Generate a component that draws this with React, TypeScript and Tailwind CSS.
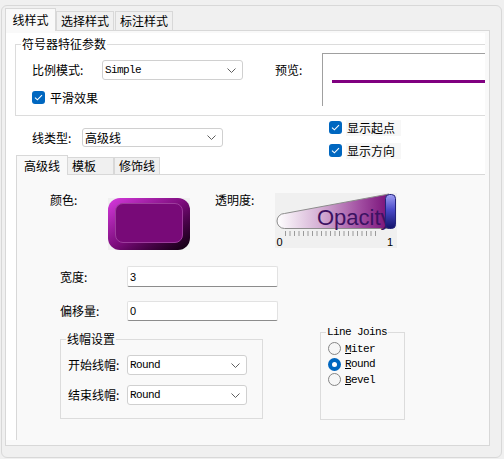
import React from 'react'

type Children = { children: React.ReactNode }

function Chevron() {
  return (
    <svg width="9" height="5" viewBox="0 0 9 5" className="block">
      <polyline points="0.5,0.5 4.5,4.5 8.5,0.5" fill="none" stroke="#5f5f5f" strokeWidth="1" />
    </svg>
  )
}

function Combo({ value, className, mono }: { value: string; className: string; mono?: boolean }) {
  return (
    <div className={`flex items-center justify-between bg-white border border-[#d0d0d0] rounded-[3px] pl-[2px] pr-[6px] ${className}`}>
      <span className={mono ? "font-['Liberation_Mono',monospace] text-[11px] tracking-[-0.6px]" : ''}>{value}</span>
      <Chevron />
    </div>
  )
}

function TextBox({ value, className }: { value: string; className: string }) {
  return (
    <div className={`flex items-center bg-white border border-[#e2e2e2] border-b-[#8c8c8c] rounded-[2px] pl-[2px] font-['Liberation_Sans',sans-serif] text-[11px] ${className}`}>
      {value}
    </div>
  )
}

function Check({ children, shaded }: Children & { shaded?: boolean }) {
  return (
    <div className="flex items-center h-[13px]">
      <span className="w-[13px] h-[13px] rounded-[3px] bg-[#0067c0] flex items-center justify-center shrink-0">
        <svg width="9" height="7" viewBox="0 0 9 7">
          <path d="M1 3.6 L3.4 5.8 L8 1.2" fill="none" stroke="#ffffff" strokeWidth="1.1" />
        </svg>
      </span>
      {shaded ? (
        <span className="ml-[4px] pl-[1px] pr-[6px] h-[16px] leading-[16px] bg-[#f7f7f7]">{children}</span>
      ) : (
        <span className="ml-[5px]">{children}</span>
      )}
    </div>
  )
}

function Radio({ checked, children }: Children & { checked?: boolean }) {
  return (
    <div className="flex items-center h-[15.5px]">
      {checked ? (
        <span className="w-[13px] h-[13px] rounded-full bg-[#0067c0] flex items-center justify-center shrink-0">
          <span className="w-[5px] h-[5px] rounded-full bg-white" />
        </span>
      ) : (
        <span className="w-[13px] h-[13px] rounded-full border border-[#858585] bg-[#f6f6f6] shrink-0" />
      )}
      <span className="ml-[4px]">{children}</span>
    </div>
  )
}

function OpacitySlider() {
  const ticks = Array.from({ length: 21 }, (_, i) => 10.5 + i * 4.5)
  return (
    <svg width="122" height="55" viewBox="0 0 122 55" className="block mt-[1px]">
      <defs>
        <linearGradient id="opacityFill" x1="0" y1="0" x2="1" y2="0">
          <stop offset="0" stopColor="#ffffff" />
          <stop offset="0.4" stopColor="#d2acd2" />
          <stop offset="0.75" stopColor="#a04ca0" />
          <stop offset="1" stopColor="#781078" />
        </linearGradient>
        <linearGradient id="opacityKnob" x1="0" y1="0" x2="0" y2="1">
          <stop offset="0" stopColor="#a0a0f4" />
          <stop offset="0.45" stopColor="#4a4ac8" />
          <stop offset="1" stopColor="#12126a" />
        </linearGradient>
      </defs>
      <rect width="122" height="55" fill="#f0f0f0" />
      <path d="M9.5 35.5 A7.5 7.5 0 0 1 9.5 20.5 L114 1 L114 35.5 Z" fill="url(#opacityFill)" stroke="#8c8c8c" />
      <text x="42" y="32" fontSize="22" fill="#3c1262" fontFamily="Liberation Sans, Arial, sans-serif">
        Opacity
      </text>
      <rect x="110.5" y="1.5" width="10" height="34" rx="4" fill="url(#opacityKnob)" stroke="#24247a" />
      {ticks.map((x) => (
        <line key={x} x1={x} y1="38" x2={x} y2="43" stroke="#9a9a9a" strokeWidth="1" />
      ))}
      <text x="1.5" y="53" fontSize="11" fill="#000" fontFamily="Liberation Sans, Arial, sans-serif">0</text>
      <text x="112" y="53" fontSize="11" fill="#000" fontFamily="Liberation Sans, Arial, sans-serif">1</text>
    </svg>
  )
}

function ColorSwatch() {
  return (
    <div className="mt-[6px] w-[82px] h-[52px] bg-[#f0f0f0] shrink-0">
      <div className="w-full h-full rounded-[12px] bg-linear-to-br from-[#d83ae0] via-[#7c0c7c] to-[#0c000c] pt-[5px] pl-[7px] pr-[7px] pb-[7px]">
        <div className="w-full h-full rounded-[8px] bg-[#780a78] border border-[#9c3c9c]" />
      </div>
    </div>
  )
}

export default function App() {
  return (
    <div className="w-[504px] h-[459px] overflow-hidden bg-[#f0f0f0] pt-[5px] pl-[1px] font-['Noto_Sans_CJK_SC',sans-serif] text-[12px] leading-[14px] text-black">
      <div className="w-[501px] h-[453px] border border-[#d8d8d8] rounded-[6px] pt-[2px] pl-[3px]">
        {/* top tabs */}
        <div className="flex items-end h-[22px]">
          <div className="relative z-10 -mb-px w-[51px] h-[23px] flex items-center justify-center bg-[#f9f9f9] border border-b-0 border-[#d8d8d8]">
            线样式
          </div>
          <div className="w-[58px] h-[19px] flex items-center justify-center bg-[#f0f0f0] border border-b-0 border-[#d8d8d8]">
            选择样式
          </div>
          <div className="ml-[1px] w-[58px] h-[19px] flex items-center justify-center bg-[#f0f0f0] border border-b-0 border-[#d8d8d8]">
            标注样式
          </div>
        </div>

        <div className="w-[485px] h-[416px] border border-[#d8d8d8] bg-[#f9f9f9] pt-[2px]">
          <div className="w-[479px] h-[407px] bg-white overflow-hidden flex flex-col">
            {/* symbolizer parameters */}
            <fieldset className="ml-[9px] mt-[4px] w-[480px] shrink-0 border border-[#dcdcdc]">
              <legend className="ml-[5px] px-[1px] leading-[14px]">符号器特征参数</legend>
              <div className="flex items-start pl-[16px] pb-[9px]">
                <div className="flex flex-col">
                  <div className="mt-[9px] flex items-center">
                    <span className="w-[70px]">比例模式:</span>
                    <Combo value="Simple" mono className="w-[141px] h-[20px]" />
                  </div>
                  <div className="mt-[11px]">
                    <Check>平滑效果</Check>
                  </div>
                </div>
                <span className="ml-[32px] mt-[12px] w-[47px]">预览:</span>
                <div className="mt-[2px] h-[53px] w-[200px] border-l border-t border-[#a0a0a0] bg-white pt-[26px] pl-[9px]">
                  <div className="h-[3px] w-full bg-[#800080]" />
                </div>
              </div>
            </fieldset>

            {/* line type */}
            <div className="flex items-start h-[39px] shrink-0">
              <div className="ml-[26px] mt-[12px] flex items-center">
                <span className="w-[50px]">线类型:</span>
                <Combo value="高级线" className="w-[141px] h-[19px]" />
              </div>
              <div className="ml-[106px] mt-[5px] flex flex-col gap-[10px]">
                <Check shaded>显示起点</Check>
                <Check shaded>显示方向</Check>
              </div>
            </div>

            {/* inner tabs */}
            <div className="ml-[10px] flex items-end h-[19px] shrink-0">
              <div className="relative z-10 -mb-px w-[52px] h-[20px] flex items-center justify-center bg-[#f9f9f9] border border-b-0 border-[#d8d8d8]">
                高级线
              </div>
              <div className="-ml-px w-[47px] h-[17px] flex items-center pl-[4px] bg-[#f0f0f0] border border-b-0 border-[#d8d8d8]">
                模板
              </div>
              <div className="w-[46px] h-[17px] flex items-center justify-center bg-[#f0f0f0] border border-b-0 border-[#d8d8d8]">
                修饰线
              </div>
            </div>

            <div className="ml-[10px] w-[480px] h-[300px] shrink-0 border border-[#d8d8d8] bg-[#f9f9f9] flex flex-col">
              {/* colour and opacity */}
              <div className="mt-[17px] flex items-start">
                <span className="ml-[33px] mt-[1px] w-[58px]">颜色:</span>
                <ColorSwatch />
                <span className="ml-[25px] mt-[1px] w-[60px]">透明度:</span>
                <OpacitySlider />
              </div>

              <div className="mt-[16px] flex items-center">
                <span className="ml-[43px] w-[67px]">宽度:</span>
                <TextBox value="3" className="w-[151px] h-[21px]" />
              </div>

              <div className="mt-[14px] flex items-center">
                <span className="ml-[43px] w-[67px]">偏移量:</span>
                <TextBox value="0" className="w-[151px] h-[20px]" />
              </div>

              <div className="flex items-start">
                <fieldset className="ml-[43px] mt-[11px] w-[203px] border border-[#dcdcdc]">
                  <legend className="ml-[5px] px-[1px] leading-[14px]">线帽设置</legend>
                  <div className="pl-[7px] pb-[13px]">
                    <div className="mt-[9px] flex items-center">
                      <span className="w-[59px]">开始线帽:</span>
                      <Combo value="Round" mono className="w-[120px] h-[20px]" />
                    </div>
                    <div className="mt-[10px] flex items-center">
                      <span className="w-[59px]">结束线帽:</span>
                      <Combo value="Round" mono className="w-[120px] h-[20px]" />
                    </div>
                  </div>
                </fieldset>

                <fieldset className="ml-[57px] mt-[4px] w-[85px] border border-[#dcdcdc] font-['Liberation_Mono',monospace] text-[11px] tracking-[-0.6px]">
                  <legend className="ml-[5px] px-[1px] leading-[14px]">Line Joins</legend>
                  <div className="pl-[7px] pt-[2px] pb-[31px]">
                    <Radio>
                      <span className="underline">M</span>iter
                    </Radio>
                    <Radio checked>
                      <span className="underline">R</span>ound
                    </Radio>
                    <Radio>
                      <span className="underline">B</span>evel
                    </Radio>
                  </div>
                </fieldset>
              </div>
            </div>
          </div>
        </div>
      </div>
    </div>
  )
}
